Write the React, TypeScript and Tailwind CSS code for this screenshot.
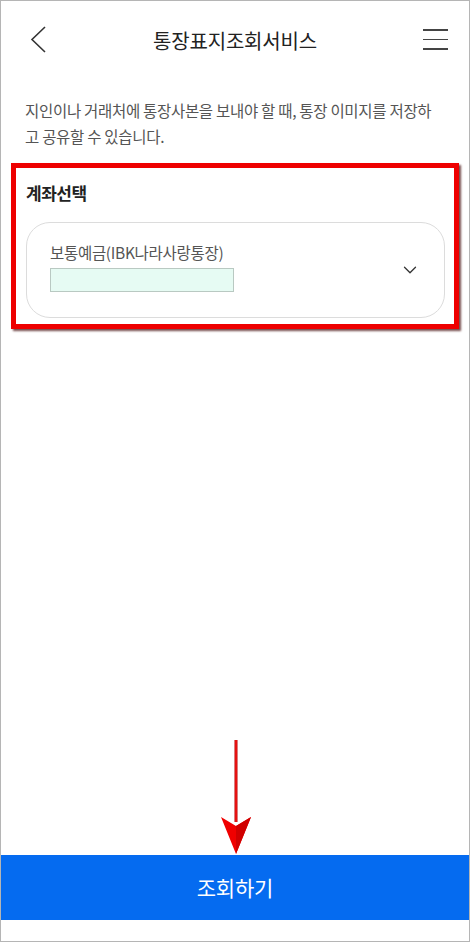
import { ChevronDown } from "lucide-react";

const font = { fontFamily: '"Noto Sans CJK KR", "Noto Sans", sans-serif' };

function Header() {
  return (
    <div className="relative flex h-[80px] shrink-0 items-center justify-center">
      <button className="absolute left-[29px] top-[24px] text-[#333]">
        <svg width="18" height="30" viewBox="0 0 18 30" fill="none" stroke="currentColor" strokeWidth="1.6">
          <polyline points="15,2 2,14.5 15,27" />
        </svg>
      </button>
      <h1 className="text-[20px] tracking-[-0.2px] text-[#222]">통장표지조회서비스</h1>
      <button className="absolute right-[21px] top-[28px] flex w-[25px] flex-col gap-[8px]">
        <span className="h-[1.5px] w-full bg-[#444]" />
        <span className="h-[1.5px] w-full bg-[#444]" />
        <span className="h-[1.5px] w-full bg-[#444]" />
      </button>
    </div>
  );
}

function AccountSelect() {
  return (
    <div className="mx-[10px] mt-[14px] border-[5px] border-[#ee0000] pb-[6px] pl-[10px] pr-[9px] pt-[13px] shadow-[2px_2px_2px_rgba(60,0,0,0.7)]">
      <div className="text-[17px] font-bold leading-[24px] tracking-[-0.5px] text-[#222]">계좌선택</div>
      <div className="mt-[17px] flex h-[96px] items-center rounded-[24px] border border-[#dcdcdc] pl-[23px] pr-[23px]">
        <div className="flex flex-1 flex-col pb-[8px]">
          <span className="text-[15.5px] leading-[22px] tracking-[-0.3px] text-[#555]">보통예금(IBK나라사랑통장)</span>
          <span className="mt-[5px] h-[24px] w-[184px] border border-[#b9c9c2] bg-[#e6fbf3]" />
        </div>
        <ChevronDown size={22} strokeWidth={1.4} className="text-[#333]" />
      </div>
    </div>
  );
}

export default function App() {
  return (
    <div
      style={font}
      className="relative flex h-[942px] w-[470px] flex-col overflow-hidden border border-[#b5b5b5] bg-white"
    >
      <Header />
      <p className="mt-[16px] break-all pl-[24px] pr-[30px] text-[15.5px] leading-[26px] tracking-[-0.3px] text-[#555]">
        지인이나 거래처에 통장사본을 보내야 할 때, 통장 이미지를 저장하고 공유할 수 있습니다.
      </p>
      <AccountSelect />
      <div className="flex-1" />
      <button className="h-[65px] w-full shrink-0 bg-[#056bf0] text-[21px] tracking-[-0.2px] text-white">
        조회하기
      </button>
      <div className="h-[21px] shrink-0" />

      <svg className="absolute left-[219px] top-[738px]" width="32" height="116" viewBox="0 0 32 116">
        <defs>
          <linearGradient id="shaft" x1="0" x2="1">
            <stop offset="0" stopColor="#b30000" />
            <stop offset="0.5" stopColor="#ff1a1a" />
            <stop offset="1" stopColor="#b30000" />
          </linearGradient>
        </defs>
        <rect x="14.5" y="1" width="3" height="82" fill="url(#shaft)" />
        <path d="M1 78 L16 87 L31 78 L16 115 Z" fill="#f00000" />
        <path d="M16 87 L31 78 L16 115 Z" fill="#d00000" />
      </svg>
    </div>
  );
}
